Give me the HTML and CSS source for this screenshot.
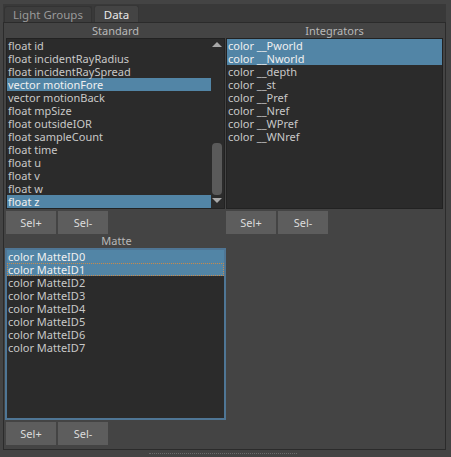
FILE: index.html
```html
<!DOCTYPE html>
<html>
<head>
<meta charset="utf-8">
<link rel="stylesheet" href="styles.css">
</head>
<body>
<div class="tabwidget">
  <div class="tabbar">
    <div class="tab">Light Groups</div>
    <div class="tab active">Data</div>
  </div>
  <div class="panel">
    <div class="columns">
      <div class="col col-left">
        <div class="label">Standard</div>
        <div class="list">
          <div class="items">
            <div class="item">float id</div>
            <div class="item">float incidentRayRadius</div>
            <div class="item">float incidentRaySpread</div>
            <div class="item sel">vector motionFore</div>
            <div class="item">vector motionBack</div>
            <div class="item">float mpSize</div>
            <div class="item">float outsideIOR</div>
            <div class="item">float sampleCount</div>
            <div class="item">float time</div>
            <div class="item">float u</div>
            <div class="item">float v</div>
            <div class="item">float w</div>
            <div class="item sel">float z</div>
          </div>
          <div class="scrollbar">
            <div class="arrow up"></div>
            <div class="track"><div class="thumb"></div></div>
            <div class="arrow down"></div>
          </div>
        </div>
        <div class="buttons">
          <div class="btn">Sel+</div>
          <div class="btn">Sel-</div>
        </div>
      </div>
      <div class="col col-right">
        <div class="label">Integrators</div>
        <div class="list">
          <div class="items">
            <div class="item sel">color __Pworld</div>
            <div class="item sel">color __Nworld</div>
            <div class="item">color __depth</div>
            <div class="item">color __st</div>
            <div class="item">color __Pref</div>
            <div class="item">color __Nref</div>
            <div class="item">color __WPref</div>
            <div class="item">color __WNref</div>
          </div>
        </div>
        <div class="buttons">
          <div class="btn">Sel+</div>
          <div class="btn">Sel-</div>
        </div>
      </div>
    </div>
    <div class="matte">
      <div class="label">Matte</div>
      <div class="list focus">
        <div class="items">
          <div class="item sel">color MatteID0</div>
          <div class="item sel current">color MatteID1</div>
          <div class="item">color MatteID2</div>
          <div class="item">color MatteID3</div>
          <div class="item">color MatteID4</div>
          <div class="item">color MatteID5</div>
          <div class="item">color MatteID6</div>
          <div class="item">color MatteID7</div>
        </div>
      </div>
      <div class="buttons">
        <div class="btn">Sel+</div>
        <div class="btn">Sel-</div>
      </div>
    </div>
  </div>
</div>
<div class="handle"></div>
</body>
</html>
```
FILE: styles.css
```css
html, body {
  margin: 0;
  padding: 0;
  background: #444444;
  font-family: "Noto Sans", "Open Sans", sans-serif;
  font-size: 11px;
  color: #c8c8c8;
  width: 451px;
  height: 457px;
  overflow: hidden;
}

.tabwidget {
  margin: 4px 5px 0 3px;
  background: #393939;
}

.tabbar {
  display: flex;
  align-items: flex-end;
  height: 18px;
  padding-left: 1px;
  gap: 2px;
}

.tab {
  box-sizing: border-box;
  height: 16px;
  width: 88px;
  background: #3d3d3d;
  border: 1px solid #333333;
  border-bottom: none;
  border-radius: 3px 3px 0 0;
  color: #9a9a9a;
  text-align: center;
  line-height: 16px;
  font-size: 11.5px;
}

.tab.active {
  height: 17px;
  width: 45px;
  background: #444444;
  color: #e8e8e8;
  border-color: #363636;
  line-height: 17px;
}

.panel {
  box-sizing: border-box;
  height: 428px;
  background: #444444;
  border: 1px solid #2b2b2b;
  padding: 0 1px 0 2px;
}

.columns {
  display: flex;
  gap: 1px;
}

.col-left { width: 219px; }
.col-right { width: 217px; }

.label {
  height: 15px;
  line-height: 15px;
  text-align: center;
  color: #b8b8b8;
}

.list {
  box-sizing: border-box;
  display: flex;
  height: 171px;
  background: #2b2b2b;
  border: 1px solid #222222;
}

.items {
  flex: 1;
  min-width: 0;
}

.item {
  height: 13px;
  line-height: 13px;
  padding-left: 1px;
  white-space: nowrap;
}

.item.sel {
  background: #5285a6;
  color: #f0f0f0;
}

.item.current {
  outline: 1px dotted #c98a4b;
  outline-offset: -1px;
}

.scrollbar {
  width: 13px;
  display: flex;
  flex-direction: column;
  align-items: center;
}

.arrow {
  width: 0;
  height: 0;
  border-left: 5px solid transparent;
  border-right: 5px solid transparent;
  margin-left: -1px;
}

.arrow.up {
  margin-top: 3px;
  border-bottom: 5px solid #a8a8a8;
}

.arrow.down {
  margin-bottom: 5px;
  border-top: 5px solid #a8a8a8;
}

.track {
  flex: 1;
  width: 100%;
  display: flex;
  flex-direction: column;
  justify-content: flex-end;
  align-items: center;
  padding-bottom: 3px;
}

.thumb {
  width: 10px;
  height: 52px;
  margin-left: -1px;
  background: #5a5a5a;
  border-radius: 4px;
}

.buttons {
  display: flex;
  gap: 2px;
  margin-top: 2px;
}

.btn {
  width: 50px;
  height: 23px;
  line-height: 23px;
  background: #5d5d5d;
  color: #dcdcdc;
  text-align: center;
}

.matte {
  width: 220px;
}

.matte .label {
  height: 14px;
  line-height: 14px;
  margin-left: 1px;
}

.list.focus {
  height: 172px;
  margin-left: -1px;
  border: 2px solid #4f7695;
}

.handle {
  width: 148px;
  margin: 3px 0 0 149px;
  border-top: 1px dotted #6a6a6a;
}
```
